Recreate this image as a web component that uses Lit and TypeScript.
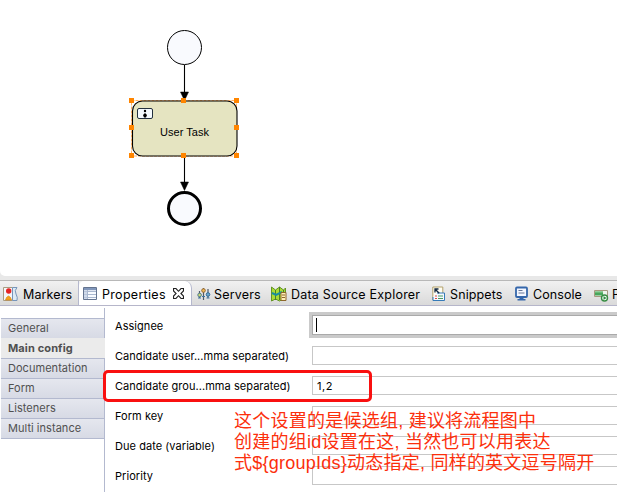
import { LitElement, html, svg, css } from "lit";
import { customElement } from "lit/decorators.js";
import { classMap } from "lit/directives/class-map.js";

const icons: Record<string, unknown> = {
  markers: svg`<path d="M.5 1.5h9v13h-9z" fill="#f4f6fa" stroke="#a99c80"/><path d="M9.5 1.5H14q-3 3-1 6.500T14 14.500H9.500z" fill="#dceaf5" stroke="#7795ba"/><circle cx="5.700" cy="5" r="2.700" fill="#e52324"/><path d="M2.500 14l1-2.500q2-3 4 0l1 2.500z" fill="#f5a31c" stroke="#d98412" stroke-width=".6"/>`,
  properties: svg`<path d="M.5 1.500h13v12H.5z" fill="#f8fbff" stroke="#64748f"/><path d="M1 2h12v2.200H1z" fill="#8197bb"/><path d="M1 5.500h12M1 8.500h12M1 11.500h12M4.500 4v9" stroke="#aab8cf" fill="none"/><path d="M1 4.500h3V13H1z" fill="#bdcbe0" opacity=".7"/>`,
  servers: svg`<path d="M2.500 5v7M6.500 2v12M11 3v9" stroke="#4f5967" stroke-width="1.200"/><circle cx="2.600" cy="9" r="1.800" fill="#d0df75" stroke="#557d8d"/><circle cx="6.500" cy="4.500" r="1.800" fill="#f0ba58" stroke="#98682b"/><circle cx="11" cy="8.500" r="1.800" fill="#6ba9cf" stroke="#376c96"/><path d="M1 12h3M5 10.500h3M9.500 12h3" stroke="#3c74a0"/>`,
  data: svg`<path d="M.5 1l4 3 4-3 4 3 2-2v12l-2-1-4 2-4-2-4 2z" fill="#a9dc35" stroke="#649426"/><path d="M4.500 4v10M8.500 1v13M12.500 4v4" stroke="#487f2c"/><path d="M1 7l4 2 6-3" stroke="#168ea2" stroke-width="2" fill="none"/><path d="M10 6.500h5v8h-5z" fill="#fff0b7" stroke="#8e672c"/><path d="M11 9h3M11 11.500h3" stroke="#8e672c"/>`,
  snippets: svg`<path d="M.8 1h10v13H.8z" fill="#fffdf1" stroke="#b3a16d"/><path d="M5 7h7.500v7.500H1V11" fill="#f4f9ff" stroke="#367bb9"/><path d="M3.200 3.200l4 4M3 6.500V3h3.500" stroke="#152942" stroke-width="1.300" fill="none"/><path d="M3 10h2M3 12.500h2" stroke="#e04c42"/><path d="M6 10h5M6 12.500h5" stroke="#4b9a62"/>`,
  console: svg`<rect x="2" y="1.500" width="11" height="9.500" rx="1" fill="#f4f7ff" stroke="#3567ab" stroke-width="1.800"/><path d="M4.500 4.500h4M4.500 7h6" stroke="#667697"/><path d="M5.500 11.500h4V13h2v1.500h-8V13h2z" fill="#3567ab"/>`,
  progress: svg`<path d="M.5 4.500h13v6H.5z" fill="#edf5ed" stroke="#a6987e"/><path d="M1 5.500h8v4H1z" fill="#48a65b"/><path d="M1 6h8" stroke="#8bcd92"/><circle cx="10.500" cy="12" r="3" fill="#fff" stroke="#378d43" stroke-width="1.400"/><path d="M9.500 10l3 2-3 2z" fill="#2f8d40"/>`,
};
const tabs = [
  ["markers", "Markers"], ["properties", "Properties"], ["servers", "Servers"],
  ["data", "Data Source Explorer"], ["snippets", "Snippets"], ["console", "Console"], ["progress", "P"],
];
const sections = ["General", "Main config", "Documentation", "Form", "Listeners", "Multi instance"];
const fields = [
  ["Assignee", ""], ["Candidate user...mma separated)", ""], ["Candidate grou...mma separated)", "1,2"],
  ["Form key", ""], ["Due date (variable)", ""], ["Priority", ""],
];
const handles = [[131, 100], [183, 100], [236, 100], [131, 127], [236, 127], [131, 155], [183, 155], [236, 155]];

@customElement("app-root")
export class AppRoot extends LitElement {
  static styles = css`
    :host { display: block; width: 617px; height: 492px; overflow: hidden; position: relative; background: #fff; color: #000; font-family: Inter, "Liberation Sans", sans-serif; }
    * { box-sizing: border-box; }
    .canvas { display: block; width: 617px; height: 276px; border-bottom-left-radius: 5px; background: #fff; }
    .top { background: #e8e8e8; }
    .divider { height: 4px; background: #e8e8e8; }
    .task-name { font: 11px "Liberation Sans", sans-serif; }
    .tabs { height: 26px; display: flex; overflow: hidden; background: linear-gradient(#f1f1f1, #dadada); border-top: 1px solid #b8b8b8; border-bottom: 1px solid #b6b6ca; }
    .tab { display: flex; flex: none; align-items: center; height: 26px; font-size: 12.5px; letter-spacing: .12px; white-space: nowrap; }
    .tab.markers { width: 79px; padding-left: 3px; border-right: 1px solid #b5b8cd; }
    .tab.properties { width: 113px; padding-left: 4px; background: #fff; border-right: 1px solid #b5b8cd; border-radius: 5px 7px 0 0; letter-spacing: .3px; }
    .tab.servers { width: 79px; padding-left: 5px; letter-spacing: .18px; }
    .tab.data { width: 161px; letter-spacing: .21px; }
    .tab.snippets { width: 82px; }
    .tab.console { width: 80px; letter-spacing: .08px; }
    .tab svg { width: 16px; height: 16px; flex: none; }
    .tab .label { margin-left: 3px; }
    .markers .label { margin-left: 4px; }
    .data .label { margin-left: 4px; }
    .servers .label { margin-left: 1px; }
    .snippets .label { margin-left: 2px; }
    .progress .label { margin-left: 2px; }
    .tab .close { width: 11px; height: 11px; margin: 0 0 1px 7px; }
    .body { display: flex; height: 186px; }
    .sections { width: 105px; flex: none; border-right: 1px solid #b3b9cf; margin-top: 2px; padding: 10px 0 0 1px; }
    .section { height: 20px; line-height: 18px; padding-left: 7px; font-size: 11px; letter-spacing: .04px; color: #505050; background: linear-gradient(#e5e7ee, #d7dae5); border-top: 1px solid #b3b9cf; white-space: nowrap; }
    .section:last-child { height: 21px; border-bottom: 1px solid #b3b9cf; }
    .section.selected { background: #ebebeb; font-weight: 700; letter-spacing: .12px; border-top-color: #ebebeb; margin-right: -1px; }
    .form { flex: 1; padding: 5px 0 0 10px; }
    .row { height: 30px; display: flex; align-items: center; }
    .name { width: 197px; flex: none; font-size: 11px; letter-spacing: .05px; white-space: nowrap; }
    .field { width: 320px; flex: none; height: 19px; margin-bottom: 2px; border: 1px solid #c7c7c7; padding-left: 4px; font-size: 11px; letter-spacing: .5px; line-height: 18px; }
    .field.focused { height: 20px; border-color: #aaa; outline: 3px solid #cacaca; padding: 2px 0 0 3px; }
    .caret { display: block; width: 1px; height: 14px; background: #000; }
    .highlight { position: absolute; left: 103px; top: 370px; width: 269px; height: 32px; border: 3px solid #f91010; border-radius: 5px; }
    .note { position: absolute; left: 234px; top: 411px; color: #fc2f0c; font: 18px/21px "Liberation Sans", "Noto Sans CJK SC", sans-serif; letter-spacing: .24px; white-space: nowrap; }
    .note div { height: 21px; }
  `;

  private diagram() {
    return html`<svg class="canvas" viewBox="0 0 617 276">
      <circle cx="184.5" cy="47.5" r="17" fill="#f9fafe" stroke="#000"/>
      <path d="M184.5 65v28M184.5 156v28" stroke="#000" stroke-width="1.1"/>
      <path d="M180.500 92h8l-4 8.500zM180.500 182h8l-4 8.500z" stroke="#000" stroke-width=".5"/>
      <rect x="131.5" y="100.500" width="105" height="55.500" fill="none" stroke="#ffb366" stroke-dasharray="3 1"/>
      <rect x="132.5" y="101" width="104.5" height="55" rx="10" fill="#e5e4c1" stroke="#000" stroke-width="1.1"/>
      <rect x="137.5" y="108.5" width="15" height="10" rx="1.5" fill="#f6fbff" stroke="#23303e"/>
      <circle cx="145" cy="111" r="1.2"/><path d="M143 115l2-2 2 2-1 2.500h-2z"/>
      <text class="task-name" x="160" y="136" textLength="49">User Task</text>
      ${handles.map(([x, y]) => svg`<rect x=${x - 2} y=${y - 2} width="5" height="5" fill="#ff8500"/>`)}
      <circle cx="184.5" cy="208.5" r="16" fill="#f9fafe" stroke="#000" stroke-width="3"/>
    </svg>`;
  }

  render() {
    return html`
      <div class="top">${this.diagram()}</div>
      <div class="divider"></div>
      <div class="tabs">${tabs.map(([id, label]) => html`<div class="tab ${id}">
        <svg viewBox="0 0 16 16" fill="none">${icons[id]}</svg><span class="label">${label}</span>
        ${id === "properties" ? html`<svg class="close" viewBox="0 0 10 10"><path d="M.5.5h2.2L5 3 7.3.5h2.2v2.2L7.2 5l2.3 2.3v2.2H7.3L5 7 2.7 9.500H.5V7.300L2.800 5 .5 2.700z" fill="none" stroke="#222"/></svg>` : ""}
      </div>`)}</div>
      <div class="body">
        <div class="sections">${sections.map((s) => html`<div class=${classMap({ section: true, selected: s === "Main config" })}>${s}</div>`)}</div>
        <div class="form">${fields.map(([name, value], i) => html`<div class="row">
          <div class="name">${name}</div>
          <div class=${classMap({ field: true, focused: i === 0 })}>${i === 0 ? html`<span class="caret"></span>` : value}</div>
        </div>`)}</div>
      </div>
      <div class="highlight"></div>
      <div class="note"><div>这个设置的是候选组, 建议将流程图中</div><div>创建的组id设置在这, 当然也可以用表达</div><div>式\${groupIds}动态指定, 同样的英文逗号隔开</div></div>`;
  }
}
